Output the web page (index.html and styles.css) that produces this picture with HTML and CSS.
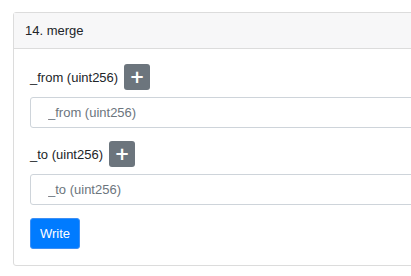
FILE: index.html
```html
<!DOCTYPE html>
<html lang="en">
<head>
    <meta charset="UTF-8">
    <meta name="viewport" content="width=device-width, initial-scale=1.0">
    <title>merge</title>
    <link rel="stylesheet" href="styles.css">
</head>
<body>
    <div class="page">
        <div class="card">
            <div class="card-header">14. merge</div>
            <form class="card-body" action="">
                <div class="field">
                    <div class="field-label">
                        <label for="from">_from (uint256)</label>
                        <button type="button" class="btn-add">+</button>
                    </div>
                    <input type="text" id="from" class="input" placeholder="_from (uint256)">
                </div>
                <div class="field">
                    <div class="field-label">
                        <label for="to">_to (uint256)</label>
                        <button type="button" class="btn-add">+</button>
                    </div>
                    <input type="text" id="to" class="input" placeholder="_to (uint256)">
                </div>
                <button type="submit" class="btn-write">Write</button>
            </form>
        </div>
    </div>
</body>
</html>
```

FILE: styles.css
```css
body {
    margin: 0;
    overflow: hidden;
    font-family: "Liberation Sans", Arial, Helvetica, sans-serif;
    color: #212529;
    background: #fff;
}
.page {
    padding: 12px 0 0 13px;
}
.card {
    width: 440px;
    border: 1px solid #dcdcdc;
    border-radius: 3px;
}
.card-header {
    height: 35px;
    line-height: 35px;
    padding-left: 11px;
    font-size: 13px;
    background-color: #f7f7f8;
    border-bottom: 1px solid #dcdcdc;
}
.card-body {
    padding: 15px 16px 16px 16px;
}
.field {
    margin-bottom: 13px;
}
.field-label {
    display: flex;
    align-items: center;
    gap: 6px;
    margin-bottom: 7px;
}
label {
    font-size: 13px;
}
.btn-add {
    width: 26px;
    height: 26px;
    padding: 0;
    border: none;
    border-radius: 3px;
    background-color: #6c757d;
    color: #fff;
    font-family: "DejaVu Sans", sans-serif;
    font-weight: bold;
    font-size: 18px;
    line-height: 26px;
}
.input {
    display: block;
    box-sizing: border-box;
    width: 100%;
    height: 31px;
    padding: 0 17px;
    border: 1px solid #ced4da;
    border-radius: 3px;
    font-family: inherit;
    font-size: 13px;
}
.input::placeholder {
    color: #6c757d;
}
.btn-write {
    display: block;
    height: 31px;
    padding: 0 9px;
    border: 1px solid #3d8ff5;
    border-radius: 3px;
    background-color: #007bff;
    color: #fff;
    font-family: inherit;
    font-size: 13px;
}
```
